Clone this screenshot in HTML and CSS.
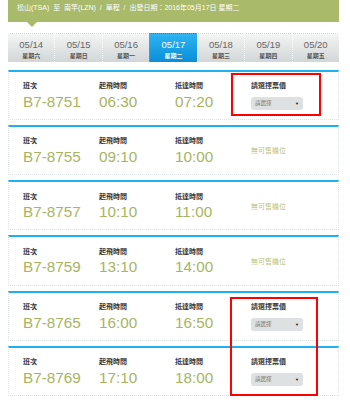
FILE: index.html
```html
<!DOCTYPE html>
<html lang="zh-Hant">
  <head>
    <meta charset="UTF-8" />
    <title>航班選擇</title>
    <link rel="stylesheet" href="styles.css">
  </head>

  <body>
    <div class="route">松山(TSA)&nbsp; 至 &nbsp;南竿(LZN) &nbsp;/ &nbsp;單程 &nbsp;/ &nbsp;出發日期：2016年05月17日 星期二</div>

    <ul class="dates">
      <li><span class="date">05/14</span><span class="day">星期六</span></li>
      <li><span class="date">05/15</span><span class="day">星期日</span></li>
      <li><span class="date">05/16</span><span class="day">星期一</span></li>
      <li class="active"><span class="date">05/17</span><span class="day">星期二</span></li>
      <li><span class="date">05/18</span><span class="day">星期三</span></li>
      <li><span class="date">05/19</span><span class="day">星期四</span></li>
      <li><span class="date">05/20</span><span class="day">星期五</span></li>
    </ul>

    <div class="flights">
      <div class="flight">
        <div class="col"><span class="label">班次</span><span class="value">B7-8751</span></div>
        <div class="col"><span class="label">起飛時間</span><span class="value">06:30</span></div>
        <div class="col"><span class="label">抵達時間</span><span class="value">07:20</span></div>
        <div class="col price">
          <span class="label">請選擇票價</span>
          <div class="select"><span>請選擇</span><span class="caret">▼</span></div>
        </div>
      </div>
      <div class="flight">
        <div class="col"><span class="label">班次</span><span class="value">B7-8755</span></div>
        <div class="col"><span class="label">起飛時間</span><span class="value">09:10</span></div>
        <div class="col"><span class="label">抵達時間</span><span class="value">10:00</span></div>
        <div class="col soldout">無可售機位</div>
      </div>
      <div class="flight">
        <div class="col"><span class="label">班次</span><span class="value">B7-8757</span></div>
        <div class="col"><span class="label">起飛時間</span><span class="value">10:10</span></div>
        <div class="col"><span class="label">抵達時間</span><span class="value">11:00</span></div>
        <div class="col soldout">無可售機位</div>
      </div>
      <div class="flight">
        <div class="col"><span class="label">班次</span><span class="value">B7-8759</span></div>
        <div class="col"><span class="label">起飛時間</span><span class="value">13:10</span></div>
        <div class="col"><span class="label">抵達時間</span><span class="value">14:00</span></div>
        <div class="col soldout">無可售機位</div>
      </div>
      <div class="flight">
        <div class="col"><span class="label">班次</span><span class="value">B7-8765</span></div>
        <div class="col"><span class="label">起飛時間</span><span class="value">16:00</span></div>
        <div class="col"><span class="label">抵達時間</span><span class="value">16:50</span></div>
        <div class="col price">
          <span class="label">請選擇票價</span>
          <div class="select"><span>請選擇</span><span class="caret">▼</span></div>
        </div>
      </div>
      <div class="flight">
        <div class="col"><span class="label">班次</span><span class="value">B7-8769</span></div>
        <div class="col"><span class="label">起飛時間</span><span class="value">17:10</span></div>
        <div class="col"><span class="label">抵達時間</span><span class="value">18:00</span></div>
        <div class="col price">
          <span class="label">請選擇票價</span>
          <div class="select"><span>請選擇</span><span class="caret">▼</span></div>
        </div>
      </div>
    </div>

    <!-- red annotation boxes -->
    <div class="mark mark-top"></div>
    <div class="mark mark-bottom"></div>
  </body>
</html>
```

FILE: styles.css
```css
body {
  margin: 0 11px 0 8px;
  background: #fff;
  font-family: "Liberation Sans", "Noto Sans CJK TC", sans-serif;
  position: relative;
}

.route {
  position: relative;
  height: 22px;
  background: #a9ba6b;
  color: #fff;
  font-size: 7px;
  line-height: 16px;
  padding-left: 9px;
  white-space: nowrap;
}

.route::after {
  content: "";
  position: absolute;
  left: 19px;
  top: 22px;
  border-left: 5.5px solid transparent;
  border-right: 5.5px solid transparent;
  border-top: 5px solid #a9ba6b;
}

.dates {
  list-style: none;
  margin: 11px 0 7.5px;
  padding: 0;
  display: flex;
  height: 29px;
}

.dates li {
  flex: 1;
  display: flex;
  flex-direction: column;
  align-items: center;
  background: linear-gradient(#f4f5f5, #d2d6d6);
  border-left: 1px dotted #fff;
  border-top: 1px dotted #fff;
  box-sizing: border-box;
}

.dates li:first-child {
  border-left: none;
}

.dates .date {
  font-size: 9.5px;
  color: #666;
  line-height: 11px;
  margin-top: 5px;
}

.dates .day {
  font-size: 6px;
  font-weight: bold;
  color: #555;
  line-height: 8px;
  margin-top: 2px;
}

.dates li.active {
  background: linear-gradient(#2db2f2, #0a8fd8);
  border-color: #2db2f2;
}

.dates li.active .date,
.dates li.active .day {
  color: #fff;
}

.flight {
  display: flex;
  height: 50.3px;
  margin-bottom: 5px;
  padding: 9.5px 0 0 14px;
  box-sizing: border-box;
  border-top: 2px solid #1fb0f0;
  border-left: 1px dotted #dde2e2;
  border-right: 1px dotted #dde2e2;
  border-bottom: 1px dotted #dde2e2;
}

.col {
  width: 76px;
  display: flex;
  flex-direction: column;
}

.col.price,
.col.soldout {
  width: 75px;
}

.label {
  font-size: 7px;
  line-height: 9px;
  font-weight: bold;
  color: #333;
}

.value {
  font-size: 15.3px;
  line-height: 17px;
  margin-top: 2.5px;
  color: #a7b55f;
}

.soldout {
  font-size: 7px;
  color: #b7c47f;
  padding-top: 9px;
}

.select {
  margin-top: 6.5px;
  width: 52px;
  height: 13px;
  border-radius: 3px;
  background: #dde1e1;
  display: flex;
  justify-content: space-between;
  align-items: center;
  padding: 0 4px 0 4px;
  box-sizing: border-box;
  font-size: 5.5px;
  color: #777;
}

.select .caret {
  font-size: 4px;
  color: #111;
}

.mark {
  position: absolute;
  border: 2.5px solid #ff0000;
  box-sizing: border-box;
}

.mark-top {
  left: 223px;
  top: 73px;
  width: 90px;
  height: 43px;
}

.mark-bottom {
  left: 222px;
  top: 297px;
  width: 88px;
  height: 99px;
}
```
